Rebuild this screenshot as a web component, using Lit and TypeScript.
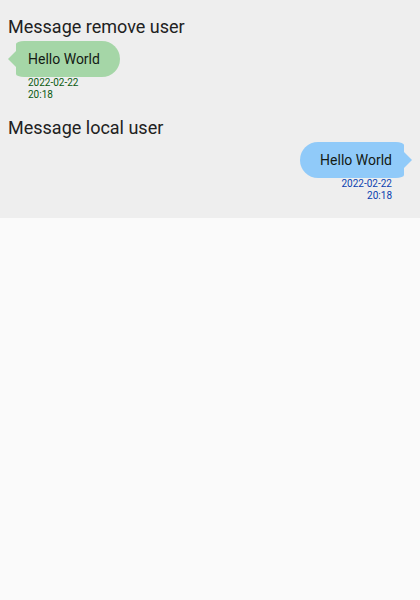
import { LitElement, html, css } from "lit";
import { customElement, property } from "lit/decorators.js";

@customElement("message-bubble")
export class MessageBubble extends LitElement {
  @property() text = "";
  @property() date = "";
  @property() time = "";
  @property({ type: Boolean, reflect: true }) local = false;

  static styles = css`
    :host {
      --fill: #a5d6a7;
      --stamp: #0a5a10;
      display: flex;
      flex-direction: column;
      align-items: flex-start;
    }
    :host([local]) {
      --fill: #90caf9;
      --stamp: #0a3fb0;
      align-items: flex-end;
    }
    .row {
      display: flex;
      align-items: center;
    }
    :host([local]) .row {
      flex-direction: row-reverse;
    }
    .tail {
      width: 8px;
      height: 16px;
      background: var(--fill);
      clip-path: polygon(0 50%, 100% 0, 100% 100%);
    }
    :host([local]) .tail {
      clip-path: polygon(100% 50%, 0 0, 0 100%);
    }
    .body {
      padding: 0 20px 0 12px;
      background: var(--fill);
      border-radius: 8px 18px 18px 8px / 3px 18px 18px 3px;
      font-size: 14px;
      line-height: 36px;
      color: #141a14;
      white-space: nowrap;
    }
    :host([local]) .body {
      padding: 0 12px 0 20px;
      border-radius: 18px 8px 8px 18px / 18px 3px 3px 18px;
    }
    .stamp {
      display: flex;
      flex-direction: column;
      padding: 0 20px;
      font-size: 10px;
      line-height: 12px;
      color: var(--stamp);
    }
    :host([local]) .stamp {
      align-items: flex-end;
    }
  `;

  render() {
    return html`
      <div class="row">
        <div class="tail"></div>
        <div class="body">${this.text}</div>
      </div>
      <div class="stamp"><span>${this.date}</span><span>${this.time}</span></div>
    `;
  }
}

@customElement("app-root")
export class AppRoot extends LitElement {
  static styles = css`
    :host {
      display: block;
      min-height: 100vh;
      background: #fafafa;
      font-family: Roboto, "Liberation Sans", sans-serif;
    }
    .panel {
      display: flex;
      flex-direction: column;
      gap: 16px;
      padding: 16px 8px;
      background: #eeeeee;
    }
    .title {
      margin: 0 0 4px;
      font-size: 18px;
      font-weight: 400;
      line-height: 21px;
      color: #212121;
    }
  `;

  render() {
    return html`
      <main class="panel">
        <section>
          <h2 class="title">Message remove user</h2>
          <message-bubble text="Hello World" date="2022-02-22" time="20:18"></message-bubble>
        </section>
        <section>
          <h2 class="title">Message local user</h2>
          <message-bubble local text="Hello World" date="2022-02-22" time="20:18"></message-bubble>
        </section>
      </main>
    `;
  }
}
